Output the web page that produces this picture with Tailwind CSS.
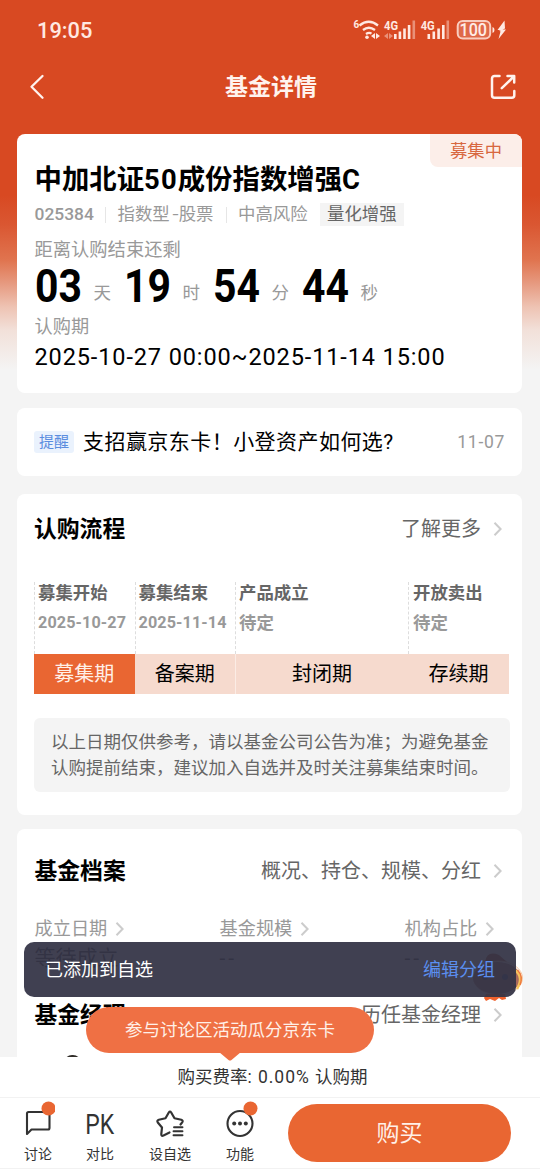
<!DOCTYPE html>
<html lang="zh-CN">
<head>
<meta charset="utf-8">
<title>基金详情</title>
<script src="https://cdn.jsdelivr.net/npm/@tailwindcss/browser@4"></script>
</head>
<body class="font-[Roboto,'Noto_Sans_CJK_SC',sans-serif] text-black">
<svg class="hidden"><symbol id="chev" viewBox="0 0 10 16"><path d="M1.5 1.7 7.6 8l-6.1 6.3" fill="none" stroke="currentColor" stroke-width="2"/></symbol></svg>
<div class="relative w-[540px] h-[1170px] overflow-hidden flex flex-col bg-[#f4f4f4] bg-[linear-gradient(180deg,#d84922_0px,#d84922_195px,#da5732_225px,#e0744f_260px,#e6997f_283px,#eec3b3_307px,#f2e0d9_330px,#f4f4f4_370px)]">
  <!-- status bar -->
  <header class="h-[60px] shrink-0 flex items-center justify-between pl-[37px] pr-[33px] text-[#ffe9e2]">
    <span class="pt-[2px] text-[21.800px] font-medium leading-[22px]">19:05</span>
    <svg width="155" height="24" viewBox="352 18 155 24" fill="none">
      <g fill="#ffe9e2" font-family="Roboto" font-weight="700">
        <text x="353.5" y="28" font-size="10">6</text>
        <text x="384" y="30" font-size="12.5" textLength="14" lengthAdjust="spacingAndGlyphs">4G</text>
        <text x="420.7" y="30" font-size="12.5" textLength="14" lengthAdjust="spacingAndGlyphs">4G</text>
        <text x="459.5" y="36" font-size="17.5" font-weight="500" textLength="27.5" lengthAdjust="spacingAndGlyphs">100</text>
      </g>
      <path d="M359.5 25.5q9.200-7.500 18.500 0M363 30q5.700-4.600 12 0M366 34q3-2 5.500-.4" stroke="#ffe9e2" stroke-width="2.300"/>
      <circle cx="367" cy="37.300" r="1.800" fill="#ffe9e2"/>
      <path d="M375 33v6l-4-3zM376 33v6l4-3z" fill="#ffe9e2"/>
      <path d="M388 33v6l-4-3zM389 33v6l4-3z" fill="#ffe9e2" opacity=".45"/>
      <path d="M394 34h2.600v5H394zM398.600 31.500h2.600V39h-2.600zM403.200 28.500h2.600V39h-2.600zM407.800 25h2.600v14h-2.600zM427.500 34h2.600v5h-2.600zM432.500 31.500h2.600V39h-2.600zM437.300 28.500h2.600V39h-2.600zM442 25h2.600v14h-2.600z" fill="#ffe9e2"/>
      <path d="M412.500 20.500h2.600V39h-2.600zM446.500 20.500h2.600V39h-2.600z" fill="#ffe9e2" opacity=".45"/>
      <rect x="457.700" y="21" width="32.500" height="17.500" rx="5" stroke="#f9cdbf" stroke-width="2" fill="#fff" fill-opacity=".18"/>
      <path d="M492.500 27v6q2-.5 2-3t-2-3z" fill="#ffe9e2"/>
      <path d="M504.500 20.500 497.500 30h3.500l-2 .8 1.500.7-2 7.500 7.500-9.500h-3.500l2.500-1z" fill="#ffe9e2"/>
    </svg>
  </header>
  <!-- title bar -->
  <nav class="h-[74px] shrink-0 flex items-start justify-between pl-[29px] pr-[23px] pt-[13px] text-[#fff3ee]">
    <svg class="mt-[1px]" width="16" height="26" viewBox="0 0 16 26" fill="none" stroke="currentColor" stroke-width="2.300" stroke-linecap="round" stroke-linejoin="round"><path d="M13.500 2 2.500 12.800 13.500 23.800"/></svg>
    <h1 class="pt-px text-[23px] leading-[28px] font-bold pl-[8px]">基金详情</h1>
    <svg class="mt-px" width="28" height="26" viewBox="0 0 28 26" fill="none" stroke="currentColor" stroke-width="2.500" stroke-linecap="round" stroke-linejoin="round"><path d="M10.500 2H5.500a2.500 2.500 0 0 0-2.500 2.500v16.800a2.500 2.500 0 0 0 2.500 2.500h17.300a2.500 2.500 0 0 0 2.500-2.500V17"/><path d="M12.800 14.200 24.800 2.500M18.500 2h6.700v6.500"/></svg>
  </nav>

  <main class="flex-1 min-h-0 overflow-hidden pl-[17px] pr-[18px] flex flex-col">
    <section class="relative h-[259px] shrink-0 rounded-[8px] bg-white overflow-hidden pl-[17.500px] flex flex-col">
      <div class="absolute right-0 top-0 w-[92px] h-[33px] rounded-bl-[8px] bg-[#fceee9] text-[#d8673f] text-[17.300px] leading-[34px] text-center">募集中</div>
      <h2 class="mt-[29px] text-[27.400px] leading-[34px] font-bold whitespace-nowrap">中加北证<span class="tracking-[1.100px]">50</span>成份指数增强C</h2>
      <div class="mt-[6px] h-[23px] flex items-center text-[17.400px] leading-[23px] text-[#999]">
        <span class="font-medium w-[70.500px] text-[17.400px]">025384</span>
        <span class="w-px h-[16px] bg-[#e6e6e6]"></span>
        <span class="pl-[11.500px] w-[120px]">指数型<span class="inline-block w-[9px] pl-[2px] origin-left scale-x-125">-</span>股票</span>
        <span class="w-px h-[16px] bg-[#e6e6e6]"></span>
        <span class="pl-[11px] w-[93px]">中高风险</span>
        <span class="bg-[#f4f4f4] text-[#666] px-[7px] w-[84px] h-[23px]">量化增强</span>
      </div>
      <div class="mt-[12px] text-[18.300px] leading-[24px] text-[#999]">距离认购结束还剩</div>
      <div class="h-[49px] flex text-[17.500px] text-[#999]">
        <div class="w-[89px] flex items-center"><b class="w-[59px] text-[46.500px] leading-[49px] text-black"><span class="inline-block origin-left scale-x-[0.88]">03</span></b><span class="mt-[13px] leading-[24px]">天</span></div>
        <div class="w-[89px] flex items-center"><b class="w-[59px] text-[46.500px] leading-[49px] text-black"><span class="inline-block origin-left scale-x-[0.88]">19</span></b><span class="mt-[13px] leading-[24px]">时</span></div>
        <div class="w-[89px] flex items-center"><b class="w-[59px] text-[46.500px] leading-[49px] text-black"><span class="inline-block origin-left scale-x-[0.88]">54</span></b><span class="mt-[13px] leading-[24px]">分</span></div>
        <div class="w-[89px] flex items-center"><b class="w-[59px] text-[46.500px] leading-[49px] text-black"><span class="inline-block origin-left scale-x-[0.88]">44</span></b><span class="mt-[13px] leading-[24px]">秒</span></div>
      </div>
      <div class="mt-[4px] text-[18.200px] leading-[24px] text-[#999]">认购期</div>
      <div class="mt-[3px] text-[23.500px] leading-[30px] tracking-[0.880px] whitespace-nowrap">2025-10-27 00:00~2025-11-14 15:00</div>
    </section>

    <section class="mt-[15px] h-[68px] shrink-0 rounded-[8px] bg-white flex items-center pl-[17px] pr-[17px]">
      <span class="w-[40px] h-[22px] rounded-[3px] bg-[#eaf2fd] text-[#5b8ddf] text-[15px] leading-[23px] text-center">提醒</span>
      <span class="ml-[9px] text-[21px] tracking-[0.450px] leading-[28px] flex-1 whitespace-nowrap">支招赢京东卡！小登资产如何选?</span>
      <span class="pb-px text-[17.500px] leading-[24px] text-[#999] tracking-[0.700px]">11-07</span>
    </section>

    <section class="mt-[18px] h-[321px] shrink-0 rounded-[8px] bg-white pl-[17px] pr-[14px] pt-[20px]">
      <div class="h-[30px] flex items-center">
        <h3 class="pt-[2px] flex-1 text-[22.800px] leading-[30px] font-bold">认购流程</h3>
        <span class="text-[20px] leading-[30px] text-[#666]">了解更多</span>
        <svg class="ml-[12px] mr-[5px] text-[#ccc]" width="10" height="16"><use href="#chev"/></svg>
      </div>
      <div class="mt-[38px] w-[475px] grid grid-cols-[100.500px_100.500px_173px_101px] text-[17.400px] font-bold text-[#999] h-[72px]">
        <div class="pl-[3px] border-l border-dashed border-[#ddd]"><div class="leading-[22px] text-[#666]">募集开始</div><div class="mt-[8px] leading-[22px] text-[16.200px] tracking-[0.100px]">2025-10-27</div></div>
        <div class="pl-[3px] border-l border-dashed border-[#ddd]"><div class="leading-[22px] text-[#666]">募集结束</div><div class="mt-[8px] leading-[22px] text-[16.200px] tracking-[0.100px]">2025-11-14</div></div>
        <div class="pl-[3px] border-l border-dashed border-[#ddd]"><div class="leading-[22px] text-[#666]">产品成立</div><div class="mt-[8px] leading-[22px]">待定</div></div>
        <div class="pl-[4px] border-l border-dashed border-[#ddd]"><div class="leading-[22px] text-[#666]">开放卖出</div><div class="mt-[8px] leading-[22px]">待定</div></div>
      </div>
      <div class="grid grid-cols-[100.500px_100.500px_173px_101px] text-[20px] leading-[40px] h-[40px] bg-[#f6dace] text-center w-[475px]">
        <div class="bg-[#e96632] text-[#fff0e8]">募集期</div>
        <div>备案期</div>
        <div class="border-l border-[#fbece5]">封闭期</div>
        <div>存续期</div>
      </div>
      <p class="mt-[24px] w-[476px] h-[74px] rounded-[6px] bg-[#f4f4f4] pl-[17px] pt-[12px] text-[17.500px] leading-[25.500px] text-[#666] whitespace-nowrap">以上日期仅供参考，请以基金公司公告为准；为避免基金<br>认购提前结束，建议加入自选并及时关注募集结束时间。</p>
    </section>

    <section class="mt-[14px] h-[260px] shrink-0 rounded-t-[8px] bg-white pl-[17.500px] pr-[14px] pt-[27px]">
      <div class="h-[30px] flex items-center">
        <h3 class="pt-[2px] flex-1 text-[22.800px] leading-[30px] font-bold">基金档案</h3>
        <span class="text-[20px] leading-[30px] text-[#666]">概况、持仓、规模、分红</span>
        <svg class="ml-[12px] mr-[5px] text-[#ccc]" width="10" height="16"><use href="#chev"/></svg>
      </div>
      <div class="mt-[31px] flex text-[18.200px] leading-[24px] text-[#999]">
        <div class="w-[185px]"><div class="flex items-center">成立日期<svg class="ml-[8px] text-[#ccc]" width="10" height="16"><use href="#chev"/></svg></div><div class="mt-[3px] text-[21px] leading-[28px] text-[#222]">等待成立</div></div>
        <div class="w-[185px]"><div class="flex items-center">基金规模<svg class="ml-[8px] text-[#ccc]" width="10" height="16"><use href="#chev"/></svg></div><div class="mt-[3px] text-[21px] leading-[28px] text-[#222] tracking-[3px]">--</div></div>
        <div><div class="flex items-center">机构占比<svg class="ml-[8px] text-[#ccc]" width="10" height="16"><use href="#chev"/></svg></div><div class="mt-[3px] text-[21px] leading-[28px] text-[#222] tracking-[3px]">--</div></div>
      </div>
      <div class="mt-[28px] h-[30px] flex items-center">
        <h3 class="pt-[2px] flex-1 text-[22.800px] leading-[30px] font-bold">基金经理</h3>
        <span class="text-[20px] leading-[30px] text-[#666]">历任基金经理</span>
        <svg class="ml-[12px] mr-[5px] text-[#ccc]" width="10" height="16"><use href="#chev"/></svg>
      </div>
      <div class="mt-[25px] ml-[29px] w-[17px] h-[16px] rounded-full bg-[#302d29]"></div>
    </section>
  </main>

  <footer class="h-[113px] shrink-0 bg-white text-[#333]">
    <div class="h-[41px] border-b border-[#f2f2f2] text-center text-[17.500px] leading-[40px] pl-[5px]">购买费率<span class="tracking-[0.950px]">: 0.00% </span>认购期</div>
    <div class="h-[71px] border-b border-[#f2f2f2] flex text-[14px] leading-[20px]">
      <div class="w-[76px] flex flex-col items-center pt-[3px]">
        <svg width="34" height="43" viewBox="21 1101 34 43" fill="none"><path d="M27 1134V1113.500q0-1.500 1.500-1.500H48q1.500 0 1.500 1.500v14.500q0 1.500-1.500 1.500H31.500z" stroke="#333" stroke-width="2.100" stroke-linejoin="round"/><circle cx="48.500" cy="1108.500" r="7" fill="#e96632"/></svg>
        <span>讨论</span>
      </div>
      <div class="w-[48px] flex flex-col items-center pt-[3px]">
        <span class="h-[43px] text-[28px] leading-[48px]"><span class="inline-block scale-x-[0.820] -mx-1">PK</span></span>
        <span>对比</span>
      </div>
      <div class="w-[92px] flex flex-col items-center pt-[3px]">
        <svg width="34" height="43" viewBox="153 1101 34 43" fill="none" stroke="#333" stroke-width="2.200" stroke-linejoin="round" stroke-linecap="round"><path d="M169.500 1132.500 163.500 1135.500Q161 1136.500 161.300 1134L162 1127.500 157.800 1122.500Q156.500 1120.500 158.800 1119.800L165.500 1118.300 168.800 1112.500Q170 1110.700 171.200 1112.500L174.500 1118.300 181.300 1119.800Q183.500 1120.500 182.200 1122.300L180.500 1124.500"/><path d="M174 1127.300h8.500M173.500 1131.300h9M173.500 1135.300h9" stroke-width="1.900"/></svg>
        <span>设自选</span>
      </div>
      <div class="w-[48px] flex flex-col items-center pt-[3px]">
        <svg width="38" height="43" viewBox="221 1101 38 43" fill="none"><circle cx="240" cy="1123.500" r="12.500" stroke="#333" stroke-width="2.100"/><g fill="#333"><circle cx="234.200" cy="1123.500" r="2"/><circle cx="240" cy="1123.500" r="2"/><circle cx="245.800" cy="1123.500" r="2"/></g><circle cx="250.500" cy="1108.500" r="7" fill="#e96632"/></svg>
        <span>功能</span>
      </div>
      <button class="ml-[24px] mt-[6px] w-[223px] h-[58px] rounded-full bg-[#e96632] text-[#fff0e8] text-[23px] leading-[58px] pt-px">购买</button>
    </div>
  </footer>

  <!-- floating mascot -->
  <svg class="absolute left-[470px] top-[950px]" width="58" height="56" viewBox="470 950 58 56">
    <path d="M485 962q2-12 14-7l8 7z" fill="#a03a10"/>
    <ellipse cx="498" cy="978" rx="24.500" ry="17" fill="#fff" stroke="#f6c9a0"/>
    <ellipse cx="497" cy="978" rx="24" ry="16" fill="#a8695c"/>
    <circle cx="485" cy="977" r="3" fill="#263a70"/><circle cx="505" cy="977" r="3" fill="#263a70"/>
    <path d="M486 994h19l1 5-4 1-3-2-4 3-5-2-4 2-2-3z" fill="#f0622d"/>
    <path d="M515 970q9 7 2 19" fill="none" stroke="#f6c45d" stroke-width="2.500"/>
    <path d="M517.500 970q6 6 2.500 15" fill="none" stroke="#ef7a3d" stroke-width="1.500"/>
  </svg>
  <!-- toast -->
  <div class="absolute left-[24px] top-[942px] w-[492px] h-[55px] rounded-[10px] bg-[#343446]/94 flex items-center justify-between pl-[21px] pr-[21px] text-[18px] leading-[24px]">
    <span class="text-white">已添加到自选</span><span class="text-[#5b8ff0]">编辑分组</span>
  </div>
  <!-- promo bubble -->
  <div class="absolute left-[86px] top-[1007px] w-[288px] h-[46px] rounded-full bg-[#ef7044] text-[#fff0e8] text-[17.500px] leading-[46px] text-center">参与讨论区活动瓜分京东卡
    <svg class="absolute left-[133px] top-[45px]" width="22" height="9" viewBox="0 0 22 9"><path d="M0 0h22L12.500 8q-1.500 1-3 0z" fill="#ef7044"/></svg>
  </div>
</div>
</body>
</html>
